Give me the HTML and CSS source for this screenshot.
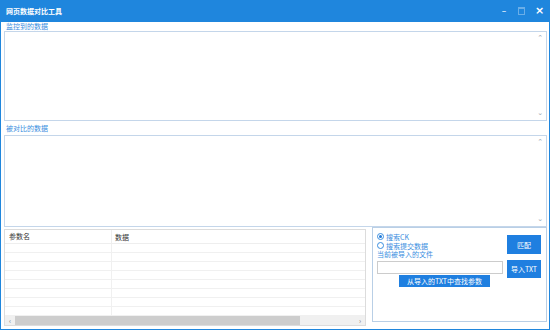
FILE: index.html
```html
<!DOCTYPE html>
<html lang="zh-CN">
<head>
  <meta charset="UTF-8">
  <title>网页数据对比工具</title>
  <link rel="stylesheet" href="styles.css">
</head>
<body>
  <div class="window">
    <div class="titlebar">
      <span class="title">网页数据对比工具</span>
      <div class="controls">
        <span class="ctl">&#8211;</span>
        <span class="ctl max"></span>
        <span class="ctl close">&#215;</span>
      </div>
    </div>

    <div class="content">
      <div class="label">监控到的数据</div>
      <div class="textbox first">
        <span class="arrow up">&#8963;</span>
        <span class="arrow down">&#8964;</span>
      </div>

      <div class="label second">被对比的数据</div>
      <div class="textbox secondbox">
        <span class="arrow up">&#8963;</span>
        <span class="arrow down">&#8964;</span>
      </div>

      <div class="bottom">
        <div class="list">
          <div class="list-head">
            <div class="col name">参数名</div>
            <div class="col data">数据</div>
          </div>
          <div class="list-body">
            <div class="row"></div><div class="row"></div><div class="row"></div>
            <div class="row"></div><div class="row"></div><div class="row"></div>
            <div class="row"></div><div class="row"></div>
          </div>
          <div class="hscroll">
            <span class="sarrow">&#8249;</span>
            <div class="track"><div class="thumb"></div></div>
            <span class="sarrow">&#8250;</span>
          </div>
        </div>

        <div class="panel">
          <div class="panel-top">
            <div class="options">
              <label class="radio"><span class="dot checked"></span>搜索CK</label>
              <label class="radio"><span class="dot"></span>搜索提交数据</label>
              <div class="file-label">当前被导入的文件</div>
            </div>
            <button class="btn match">匹配</button>
          </div>
          <div class="panel-mid">
            <div class="file-input"></div>
            <button class="btn import">导入TXT</button>
          </div>
          <button class="btn search">从导入的TXT中查找参数</button>
        </div>
      </div>
    </div>
  </div>
</body>
</html>
```

FILE: styles.css
```css
body {
  margin: 0;
  background: #ffffff;
  font-family: "Noto Sans CJK SC", "Noto Sans", sans-serif;
}

.window {
  width: 550px;
  height: 330px;
  box-sizing: border-box;
  border: 1px solid #1f86dd;
  border-top: none;
  display: flex;
  flex-direction: column;
  background: #ffffff;
}

/* Title bar */
.titlebar {
  height: 22px;
  background-color: #1f86dd;
  display: flex;
  align-items: center;
  justify-content: space-between;
  padding: 0 6px 0 5px;
  flex-shrink: 0;
}

.title {
  color: #ffffff;
  font-size: 7px;
  font-weight: bold;
}

.controls {
  display: flex;
  align-items: center;
  gap: 10px;
}

.ctl {
  color: #ffffff;
  font-family: "DejaVu Sans", sans-serif;
  font-size: 9px;
  width: 8px;
  text-align: center;
  line-height: 10px;
}

.ctl.max {
  width: 5px;
  height: 5px;
  border: 1px solid #6aaee8;
  border-top-width: 2px;
}

.ctl.close {
  font-size: 11px;
  font-weight: bold;
}

/* Main area */
.content {
  flex: 1;
  display: flex;
  flex-direction: column;
  padding: 0 2px 0 3px;
}

.label {
  color: #3a8ee0;
  font-size: 7px;
  height: 9px;
  line-height: 9px;
  padding-left: 2px;
}

.label.second {
  height: 13px;
  line-height: 13px;
  padding-top: 1px;
}

.textbox {
  position: relative;
  border: 1px solid #c4d6ea;
  background: #ffffff;
}

.textbox.first {
  height: 88px;
}

.textbox.secondbox {
  height: 90px;
}

.arrow {
  position: absolute;
  right: 3px;
  color: #9aa6b2;
  font-family: "DejaVu Sans", sans-serif;
  font-size: 7px;
  line-height: 7px;
}

.arrow.up {
  top: 3px;
}

.arrow.down {
  bottom: 3px;
}

/* Bottom section */
.bottom {
  display: flex;
  gap: 6px;
  margin-top: 2px;
}

.list {
  width: 362px;
  height: 97px;
  border: 1px solid #dcdcdc;
  display: flex;
  flex-direction: column;
  box-sizing: border-box;
}

.list-head {
  display: flex;
  height: 13px;
  align-items: center;
  font-size: 7px;
  color: #333333;
  border-bottom: 1px solid #eeeeee;
}

.col.name {
  width: 102px;
  padding-left: 4px;
  border-right: 1px solid #eeeeee;
  height: 100%;
  line-height: 13px;
}

.col.data {
  padding-left: 3px;
}

.list-body {
  flex: 1;
  background-image: linear-gradient(to right, transparent 106px, #f0f0f0 106px, #f0f0f0 107px, transparent 107px);
}

.row {
  height: 9px;
  border-bottom: 1px solid #f0f0f0;
  box-sizing: border-box;
}

.hscroll {
  height: 9px;
  display: flex;
  align-items: center;
  background: #f0f0f0;
}

.sarrow {
  width: 10px;
  text-align: center;
  font-size: 7px;
  color: #777777;
  line-height: 9px;
}

.track {
  flex: 1;
  height: 9px;
}

.thumb {
  width: 285px;
  height: 9px;
  background: #cdcdcd;
}

/* Right panel */
.panel {
  width: 175px;
  height: 95px;
  box-sizing: border-box;
  border: 1px solid #b9cfe6;
  margin-top: -2px;
  padding: 4px 4px 0 4px;
  display: flex;
  flex-direction: column;
}

.panel-top {
  display: flex;
  justify-content: space-between;
}

.options {
  display: flex;
  flex-direction: column;
}

.radio {
  display: flex;
  align-items: center;
  gap: 2px;
  font-size: 7px;
  color: #3a8ee0;
  height: 9px;
}

.dot {
  width: 5px;
  height: 5px;
  border: 1px solid #3a8ee0;
  border-radius: 50%;
  box-sizing: content-box;
  position: relative;
}

.dot.checked::after {
  content: "";
  position: absolute;
  left: 1px;
  top: 1px;
  width: 3px;
  height: 3px;
  border-radius: 50%;
  background: #1f78d8;
}

.file-label {
  font-size: 7px;
  color: #3a8ee0;
  height: 9px;
  line-height: 9px;
}

.btn {
  border: none;
  background-color: #1f7fe0;
  color: #ffffff;
  font-family: "Noto Sans CJK SC", "Noto Sans", sans-serif;
  font-size: 7px;
  padding: 0;
  cursor: pointer;
}

.btn.match {
  width: 34px;
  height: 19px;
  margin-top: 3px;
  margin-right: 1px;
}

.panel-mid {
  display: flex;
  justify-content: space-between;
  align-items: flex-start;
  margin-top: 1px;
}

.file-input {
  width: 124px;
  height: 11px;
  border: 1px solid #cccccc;
  margin-top: 1px;
}

.btn.import {
  width: 34px;
  height: 18px;
  margin-right: 1px;
}

.btn.search {
  width: 91px;
  height: 12px;
  margin: -3px 0 0 22px;
}
```
